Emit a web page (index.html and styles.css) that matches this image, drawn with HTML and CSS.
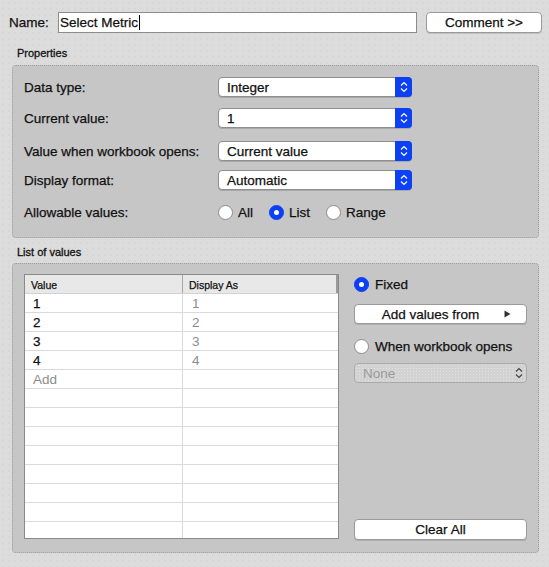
FILE: index.html
```html
<!DOCTYPE html>
<html>
<head>
<meta charset="utf-8">
<link rel="stylesheet" href="styles.css">
</head>
<body>
<div class="name-row">
  <label class="name-label">Name:</label>
  <div class="text-input"><span>Select Metric</span><span class="caret"></span></div>
  <button class="btn">Comment &gt;&gt;</button>
</div>

<div class="section-title title-props">Properties</div>
<div class="panel props">
  <div class="prop-row">
    <span class="prop-label">Data type:</span>
    <div class="select"><span class="select-text">Integer</span><span class="select-arrows"><svg width="8" height="12" viewBox="0 0 8 12"><polyline points="1,4.5 4,1.5 7,4.5" fill="none" stroke="#fff" stroke-width="1.2"/><polyline points="1,7.5 4,10.5 7,7.5" fill="none" stroke="#fff" stroke-width="1.2"/></svg></span></div>
  </div>
  <div class="prop-row r2">
    <span class="prop-label">Current value:</span>
    <div class="select"><span class="select-text">1</span><span class="select-arrows"><svg width="8" height="12" viewBox="0 0 8 12"><polyline points="1,4.5 4,1.5 7,4.5" fill="none" stroke="#fff" stroke-width="1.2"/><polyline points="1,7.5 4,10.5 7,7.5" fill="none" stroke="#fff" stroke-width="1.2"/></svg></span></div>
  </div>
  <div class="prop-row r3">
    <span class="prop-label">Value when workbook opens:</span>
    <div class="select"><span class="select-text">Current value</span><span class="select-arrows"><svg width="8" height="12" viewBox="0 0 8 12"><polyline points="1,4.5 4,1.5 7,4.5" fill="none" stroke="#fff" stroke-width="1.2"/><polyline points="1,7.5 4,10.5 7,7.5" fill="none" stroke="#fff" stroke-width="1.2"/></svg></span></div>
  </div>
  <div class="prop-row r4">
    <span class="prop-label">Display format:</span>
    <div class="select"><span class="select-text">Automatic</span><span class="select-arrows"><svg width="8" height="12" viewBox="0 0 8 12"><polyline points="1,4.5 4,1.5 7,4.5" fill="none" stroke="#fff" stroke-width="1.2"/><polyline points="1,7.5 4,10.5 7,7.5" fill="none" stroke="#fff" stroke-width="1.2"/></svg></span></div>
  </div>
  <div class="prop-row r5">
    <span class="prop-label">Allowable values:</span>
    <div class="radio-group">
      <span class="radio-opt"><span class="radio"></span>All</span>
      <span class="radio-opt"><span class="radio on"></span>List</span>
      <span class="radio-opt"><span class="radio"></span>Range</span>
    </div>
  </div>
</div>

<div class="section-title title-list">List of values</div>
<div class="panel list">
  <div class="table">
    <div class="thead"><div class="cell c1">Value</div><div class="cell c2">Display As</div></div>
    <div class="row"><div class="cell c1">1</div><div class="cell c2 muted">1</div></div>
    <div class="row"><div class="cell c1">2</div><div class="cell c2 muted">2</div></div>
    <div class="row"><div class="cell c1">3</div><div class="cell c2 muted">3</div></div>
    <div class="row"><div class="cell c1">4</div><div class="cell c2 muted">4</div></div>
    <div class="row"><div class="cell c1 muted">Add</div><div class="cell c2"></div></div>
    <div class="row"><div class="cell c1"></div><div class="cell c2"></div></div>
    <div class="row"><div class="cell c1"></div><div class="cell c2"></div></div>
    <div class="row"><div class="cell c1"></div><div class="cell c2"></div></div>
    <div class="row"><div class="cell c1"></div><div class="cell c2"></div></div>
    <div class="row"><div class="cell c1"></div><div class="cell c2"></div></div>
    <div class="row"><div class="cell c1"></div><div class="cell c2"></div></div>
    <div class="row"><div class="cell c1"></div><div class="cell c2"></div></div>
    <div class="row"><div class="cell c1"></div><div class="cell c2"></div></div>
  </div>
  <div class="side">
    <div class="radio-line fixed-row"><span class="radio on"></span>Fixed</div>
    <button class="btn btn-add"><span class="btn-add-text">Add values from</span><svg class="tri" width="7" height="8" viewBox="0 0 7 8"><polygon points="0.5,0.5 6.5,4 0.5,7.5" fill="#333"/></svg></button>
    <div class="radio-line when-row"><span class="radio"></span>When workbook opens</div>
    <div class="select disabled"><span class="select-text">None</span><span class="select-arrows"><svg width="8" height="12" viewBox="0 0 8 12"><polyline points="1,4.5 4,1.5 7,4.5" fill="none" stroke="#444" stroke-width="1.2"/><polyline points="1,7.5 4,10.5 7,7.5" fill="none" stroke="#444" stroke-width="1.2"/></svg></span></div>
    <button class="btn btn-clear">Clear All</button>
  </div>
</div>
</body>
</html>
```

FILE: styles.css
```css
html, body {
  margin: 0;
  padding: 0;
}
body {
  width: 549px;
  height: 567px;
  overflow: hidden;
  background-color: #dcdcdc;
  background-image: radial-gradient(circle, #d2d2d2 0.6px, transparent 0.8px);
  background-size: 6px 6px;
  font-family: "Liberation Sans", Arial, sans-serif;
  font-size: 13.5px;
  color: #111;
  -webkit-text-stroke: 0.25px currentColor;
}

.name-row {
  display: grid;
  grid-template-columns: 40px 359px 116px;
  column-gap: 9px;
  align-items: center;
  padding: 12px 0 0 9px;
}
.name-label {
  line-height: 21px;
}
.text-input {
  height: 21px;
  box-sizing: border-box;
  border: 1px solid #8c8c8c;
  background: #fff;
  display: flex;
  align-items: center;
  padding-left: 1px;
}
.caret {
  width: 1px;
  height: 15px;
  background: #000;
  margin-left: 1px;
}

.btn {
  height: 21px;
  box-sizing: border-box;
  border: 1px solid #9a9a9a;
  border-radius: 4px;
  background: #fff;
  font: inherit;
  color: #111;
  padding: 0;
  box-shadow: 0 1px 0 rgba(0, 0, 0, 0.12);
  display: flex;
  align-items: center;
  justify-content: center;
}

.section-title {
  font-size: 11px;
  line-height: 14px;
  padding-left: 17px;
  -webkit-text-stroke: 0.3px currentColor;
}
.title-props {
  margin-top: 13px;
}
.title-list {
  margin-top: 7px;
}

.panel {
  margin-left: 12px;
  width: 527px;
  box-sizing: border-box;
  border: 1px dotted #9c9c9c;
  border-radius: 4px;
  background: #c6c6c6;
}

.props {
  margin-top: 5px;
  height: 173px;
  padding: 11px 0 0 11px;
}
.prop-row {
  display: flex;
  align-items: center;
  height: 20px;
}
.r2 { margin-top: 11px; }
.r3 { margin-top: 13px; }
.r4 { margin-top: 9px; }
.r5 { margin-top: 12px; }
.prop-label {
  width: 194px;
}

.select {
  width: 194px;
  height: 20px;
  box-sizing: border-box;
  border: 1px solid #8f8f8f;
  border-radius: 4px;
  background: #fff;
  display: flex;
  align-items: center;
  box-shadow: 0 1px 0 rgba(0, 0, 0, 0.15);
}
.select-text {
  flex: 1;
  padding-left: 8px;
}
.select-arrows {
  width: 17px;
  height: 20px;
  margin: -1px -1px -1px 0;
  border-radius: 0 4px 4px 0;
  background: #0b40f5;
  display: flex;
  align-items: center;
  justify-content: center;
}

.radio-group {
  display: flex;
  gap: 16px;
}
.radio-opt {
  display: flex;
  align-items: center;
  gap: 5px;
}
.radio {
  width: 15px;
  height: 15px;
  box-sizing: border-box;
  border-radius: 50%;
  border: 1px solid #8a8a8a;
  background: #fff;
  flex: none;
}
.radio.on {
  background: #0b40f5;
  border-color: #0b40f5;
  display: flex;
  align-items: center;
  justify-content: center;
}
.radio.on::after {
  content: "";
  width: 5px;
  height: 5px;
  border-radius: 50%;
  background: #fff;
}

.list {
  margin-top: 4px;
  height: 290px;
  padding: 10px 11px 0 11px;
  display: flex;
  align-items: flex-start;
  gap: 15px;
}

.table {
  width: 315px;
  height: 265px;
  box-sizing: border-box;
  border: 1px solid #8a8a8a;
  background: #fff;
  overflow: hidden;
}
.thead {
  display: flex;
  height: 19px;
  box-sizing: border-box;
  border-bottom: 1px solid #d2d2d2;
  background: #e8e8e8;
  font-size: 10.5px;
  box-shadow: inset -2px 0 0 #9a9a9a;
}
.row {
  display: flex;
  height: 19px;
  box-sizing: border-box;
  border-bottom: 1px solid #dadada;
}
.cell {
  box-sizing: border-box;
  line-height: 18px;
  padding-top: 1px;
}
.c1 {
  width: 158px;
  border-right: 1px solid #dadada;
  padding-left: 8px;
}
.c2 {
  flex: 1;
  padding-left: 9px;
}
.thead .c1 {
  border-right-color: #a6a6a6;
  padding-left: 6px;
}
.thead .c2 {
  padding-left: 6px;
}
.muted {
  color: #8c8c8c;
  -webkit-text-stroke: 0;
}

.side {
  width: 173px;
  height: 266px;
  display: flex;
  flex-direction: column;
}
.radio-line {
  display: flex;
  align-items: center;
  gap: 6px;
  height: 15px;
}
.fixed-row {
  margin-top: 3px;
}
.btn-add {
  margin-top: 12px;
  height: 20px;
  width: 173px;
  justify-content: flex-start;
}
.btn-add-text {
  flex: 1;
  text-align: center;
  padding-left: 2px;
}
.tri {
  margin-right: 15px;
}
.when-row {
  margin-top: 15px;
}
.select.disabled {
  margin-top: 9px;
  width: 173px;
  border-color: #ababab;
  background-color: #d2d2d2;
  background-image: radial-gradient(circle, #e2e2e2 0.6px, transparent 0.8px);
  background-size: 3px 3px;
  color: #9a9a9a;
  box-shadow: none;
  -webkit-text-stroke: 0;
}
.select.disabled .select-arrows {
  background: transparent;
}
.btn-clear {
  margin-top: auto;
  width: 173px;
}
```
